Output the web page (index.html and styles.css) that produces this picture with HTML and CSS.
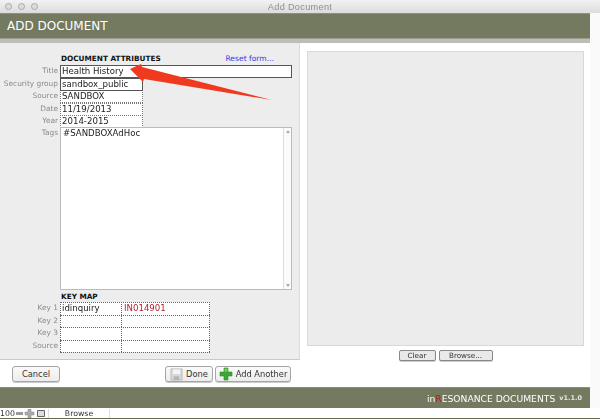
FILE: index.html
```html
<!DOCTYPE html>
<html>
<head>
<meta charset="utf-8">
<title>Add Document</title>
<link rel="stylesheet" href="styles.css">
</head>
<body>
<div class="titlebar">
  <div class="lights"><i></i><i></i><i></i></div>
  <div class="wintitle">Add Document</div>
</div>
<div class="window">
  <div class="header">ADD DOCUMENT</div>
  <div class="stripe"></div>
  <div class="main">
    <div class="left">
      <div class="panel">
        <div class="headrow">
          <div class="heading">DOCUMENT ATTRIBUTES</div>
          <a class="reset">Reset form...</a>
        </div>
        <div class="row"><span class="label">Title</span><div class="field wide solid">Health History</div></div>
        <div class="row"><span class="label">Security group</span><div class="field solid">sandbox_public</div></div>
        <div class="row"><span class="label">Source</span><div class="field">SANDBOX</div></div>
        <div class="row"><span class="label">Date</span><div class="field">11/19/2013</div></div>
        <div class="row"><span class="label">Year</span><div class="field">2014-2015</div></div>
        <div class="row tagsrow"><span class="label">Tags</span>
          <div class="tags"><span class="tagtext">#SANDBOXAdHoc</span>
            <div class="scroll"><b class="up"></b><b class="down"></b></div>
          </div>
        </div>
        <div class="heading keyhead">KEY MAP</div>
        <div class="keytable">
          <div class="row"><span class="label">Key 1</span><div class="cell c1">idinquiry</div><div class="cell c2 red">IN014901</div></div>
          <div class="row"><span class="label">Key 2</span><div class="cell c1"></div><div class="cell c2"></div></div>
          <div class="row"><span class="label">Key 3</span><div class="cell c1"></div><div class="cell c2"></div></div>
          <div class="row"><span class="label">Source</span><div class="cell c1"></div><div class="cell c2"></div></div>
        </div>
      </div>
      <div class="actions">
        <button class="btn cancel">Cancel</button>
        <div class="actions-right">
          <button class="btn done">
            <svg class="ico" width="13" height="13" viewBox="0 0 14 14"><path d="M1 1h12v12H1z" fill="#d8d8d8" stroke="#bbb"/><path d="M3 1.500h8v5H3z" fill="#f4f4f4"/><path d="M4 9h6v4H4z" fill="#b5b5b5"/></svg>
            Done</button>
          <button class="btn add">
            <svg class="ico" width="14" height="14" viewBox="0 0 14 14"><path d="M5 1h4v4h4v4H9v4H5V9H1V5h4z" fill="#3fa535" stroke="#2c8a28" stroke-width=".6"/><path d="M5.600 1.600h2.800v3H5.600z" fill="#7ed266"/></svg>
            Add Another</button>
        </div>
      </div>
    </div>
    <div class="right">
      <div class="preview"></div>
      <div class="previewbtns">
        <button class="btn small clear">Clear</button>
        <button class="btn small browse">Browse...</button>
      </div>
    </div>
  </div>
  <div class="footer"><span>in<em>R</em>ESONANCE DOCUMENTS</span><small>v1.1.0</small></div>
</div>
<div class="status">
  <span class="zoomval">100</span>
  <svg width="33" height="9" viewBox="0 0 33 9"><path d="M1 3h7v3H1z" fill="#999"/><path d="M10 3h3V0h3v3h3v3h-3v3h-3V6h-3z" fill="#aaa" stroke="#888" stroke-width=".5"/><path d="M22.500 1.500h7v6h-7z" fill="#ddd" stroke="#666"/></svg>
  <span class="mode">Browse</span>
</div>
<div class="bottomedge"></div>
<svg class="arrow" width="150" height="40" viewBox="0 0 150 40">
  <path d="M0 5 L11 0 L12 3 L142 36 L14 15 L13 18 Z" fill="#f03a20"/>
</svg>
</body>
</html>
```
FILE: styles.css
```css
* { box-sizing: border-box; }
html, body { margin: 0; height: 419px; overflow: hidden; }
body { position: relative; width: 600px; background: #fafafa; font-family: "DejaVu Sans", sans-serif; font-size: 8.600px; color: #222; filter: blur(.35px); }
.titlebar { height: 13px; background: linear-gradient(#f2f2f2, #dcdcdc); display: flex; align-items: center; position: relative; }
.lights { display: flex; gap: 6px; padding-left: 5px; }
.lights i { width: 7px; height: 7px; border-radius: 50%; background: #dcdcdc; border: 1px solid #a9a9a9; }
.wintitle { position: absolute; left: 0; right: 0; text-align: center; font: 9.200px "Liberation Sans", sans-serif; color: #8f8f8f; letter-spacing: .3px; }
.window { width: 590px; background: #fff; }
.header { height: 25px; background: #737a60; border-top: 1px solid #8d8f80; color: #fff; font-size: 12px; line-height: 24px; padding-left: 7px; }
.stripe { height: 5px; background: #bdbdb9; border-top: 1px solid #9c9f90; }
.main { display: flex; height: 344px; }
.left { width: 300px; flex: none; }
.panel { height: 317px; background: #ededed; border-right: 1px solid #dcdcdc; border-bottom: 1px solid #c9c9c9; padding: 11px 0 0 60px; }
.headrow { display: flex; height: 11px; width: 231px; justify-content: space-between; align-items: flex-start; padding-left: 1px; line-height: 9px; }
.heading { font-size: 7.300px; font-weight: bold; color: #111; }
.reset { color: #3c3ce0; font-size: 7.600px; padding-right: 17px; }
.row { display: flex; height: 12.500px; position: relative; }
.label { position: absolute; right: 100%; margin-right: 2px; top: 1px; font-size: 7.400px; color: #8a8a8a; white-space: nowrap; line-height: 10px; }
.field { width: 83px; height: 13px; background: #fff; border: 1px dotted #777; padding-left: 1px; line-height: 10px; white-space: nowrap; }
.field.solid { border: 1px solid #555; position: relative; z-index: 1; }
.field.wide { width: 232px; }
.tagsrow { height: 163px; margin-top: -.5px; }
.tags { width: 232px; height: 163px; background: #fff; border: 1px solid #bbb; padding: 0 0 0 2px; line-height: 10px; display: flex; justify-content: space-between; }
.scroll { width: 8px; height: 100%; border-left: 1px solid #ddd; display: flex; flex-direction: column; justify-content: space-between; align-items: center; padding: 2px 0; background: #fbfbfb; }
.up, .down { width: 0; height: 0; border-left: 2px solid transparent; border-right: 2px solid transparent; }
.up { border-bottom: 3px solid #aaa; }
.down { border-top: 3px solid #aaa; }
.keyhead { margin-top: 3px; height: 9px; line-height: 8px; padding-left: 1px; }
.keytable { width: 150px; border-bottom: 1px dotted #666; }
.cell { height: 100%; background: #fff; border: 1px dotted #666; border-bottom: 0; line-height: 10px; padding-left: 1px; white-space: nowrap; }
.c1 { width: 62px; }
.c2 { width: 89px; margin-left: -1px; padding-left: 2px; }
.red { color: #b5202c; }
.actions { display: flex; justify-content: space-between; padding: 6px 9px 0 12px; }
.actions-right { display: flex; gap: 2px; }
.btn { font-family: "DejaVu Sans", sans-serif; font-size: 8.300px; color: #333; height: 16px; background: linear-gradient(#fafafa, #ececec); border: 1px solid #a5a5a5; border-radius: 3px; padding: 0; display: flex; align-items: center; justify-content: center; gap: 3px; box-shadow: 0 1px 0 #ccc; }
.cancel { width: 48px; }
.done { width: 48px; }
.add { width: 76px; }
.right { flex: 1; padding: 8px 7px 0 7px; }
.preview { width: 277px; height: 295px; background: #ececec; border: 1px solid #d8d8d8; }
.previewbtns { display: flex; justify-content: center; gap: 3px; padding-top: 4px; }
.small { height: 11px; font-size: 7.200px; background: #e9e9e9; border: 1px solid #888; border-radius: 2px; }
.clear { width: 37px; }
.browse { width: 54px; }
.footer { height: 21px; background: #737a60; border-top: 1px solid #8a8c7c; color: #fff; display: flex; justify-content: flex-end; align-items: center; gap: 4px; padding-right: 8px; font-size: 9.200px; }
.footer em { color: #a8251c; font-style: normal; }
.footer small { font-size: 6.500px; font-weight: bold; color: #e8e8e0; }
.status { height: 10px; background: #fff; display: flex; align-items: center; font-size: 7.800px; color: #333; line-height: 9px; }
.zoomval { width: 15px; }
.mode { width: 62px; text-align: center; border-left: 1px solid #ddd; border-right: 1px solid #ddd; }
.bottomedge { height: 1px; background: #5f6a4c; }
.arrow { position: absolute; left: 130px; top: 64px; z-index: 2; }
```
